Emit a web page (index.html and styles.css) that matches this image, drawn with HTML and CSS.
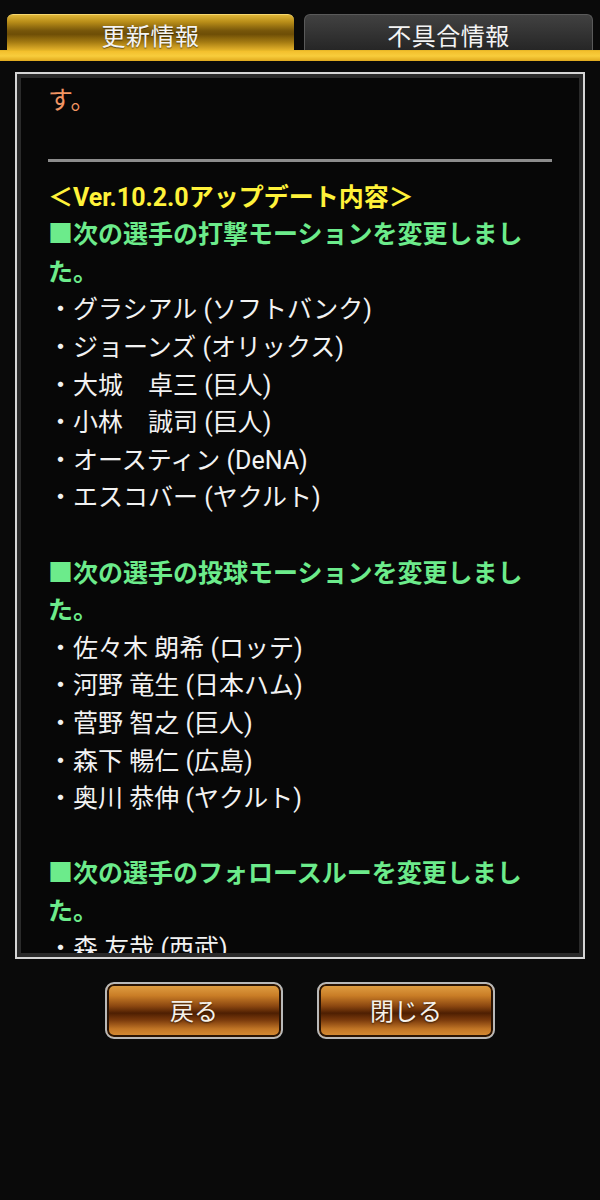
FILE: index.html
```html
<!DOCTYPE html>
<html lang="ja">
<head>
<meta charset="utf-8">
<link rel="stylesheet" href="styles.css">
</head>
<body>
<div class="tabs">
  <div class="tab active">更新情報</div>
  <div class="tab">不具合情報</div>
</div>
<div class="bar"></div>
<div class="panel">
  <div class="content">
    <p class="orange">す。</p>
    <hr class="sep">
    <p class="yellow">＜Ver.10.2.0アップデート内容＞</p>
    <p class="green">■次の選手の打撃モーションを変更しました。</p>
    <p>・グラシアル (ソフトバンク)</p>
    <p>・ジョーンズ (オリックス)</p>
    <p>・大城　卓三 (巨人)</p>
    <p>・小林　誠司 (巨人)</p>
    <p>・オースティン (DeNA)</p>
    <p>・エスコバー (ヤクルト)</p>
    <p class="blank">&nbsp;</p>
    <p class="green">■次の選手の投球モーションを変更しました。</p>
    <p>・佐々木 朗希 (ロッテ)</p>
    <p>・河野 竜生 (日本ハム)</p>
    <p>・菅野 智之 (巨人)</p>
    <p>・森下 暢仁 (広島)</p>
    <p>・奥川 恭伸 (ヤクルト)</p>
    <p class="blank">&nbsp;</p>
    <p class="green">■次の選手のフォロースルーを変更しました。</p>
    <p>・森 友哉 (西武)</p>
  </div>
</div>
<div class="buttons">
  <div class="btn">戻る</div>
  <div class="btn">閉じる</div>
</div>
</body>
</html>
```
FILE: styles.css
```css
html, body {
  margin: 0;
  padding: 0;
  background: #0a0a0a;
  width: 600px;
  height: 1200px;
  overflow: hidden;
  font-family: Roboto, "Noto Sans CJK JP", sans-serif;
}

.tabs {
  display: flex;
  gap: 10px;
  padding: 14px 7px 0 7px;
}

.tab {
  flex: 1;
  height: 36px;
  box-sizing: border-box;
  display: flex;
  align-items: center;
  justify-content: center;
  color: #f4f4f4;
  font-size: 24px;
  font-family: "Noto Sans CJK JP", sans-serif;
  letter-spacing: 0.5px;
  border-radius: 6px 6px 0 0;
  border: 1px solid #5a5a5a;
  border-bottom: none;
  background: linear-gradient(#414141 0%, #353535 45%, #262626 100%);
  padding-top: 4px;
}

.tab.active {
  border: none;
  border-top: 1px solid #f6d870;
  background: linear-gradient(#dfb537 0%, #b88d18 20%, #77560a 45%, #6e4e06 55%, #a67c12 78%, #e3b12a 100%);
  text-shadow: 0 1px 1px rgba(0,0,0,0.5);
}

.bar {
  height: 11px;
  box-sizing: border-box;
  background: linear-gradient(#f3bf2c 0%, #f8cd3c 50%, #e0a91e 100%);
  border-top: 1px solid #e8b828;
}

.panel {
  margin: 11px 15px 0 15px;
  height: 887px;
  box-sizing: border-box;
  border: 2px solid #d6d6d6;
  background: #070707;
  box-shadow: inset 0 0 0 4px #2a2a2a;
  padding: 4px;
  overflow: hidden;
}

.content {
  height: 100%;
  overflow: hidden;
  padding: 4px 27px 0 27px;
  box-sizing: border-box;
}

.content p {
  margin: 0;
  font-size: 25px;
  line-height: 37.6px;
  color: #f2f2f2;
}

.content .orange {
  color: #f29563;
}

.content .yellow {
  color: #fff23a;
  font-weight: bold;
}

.content .green {
  color: #6ceb8b;
  font-weight: bold;
}

.sep {
  border: none;
  height: 3px;
  background: #8c8c8c;
  margin: 39px 0 17px 0;
}

.buttons {
  display: flex;
  justify-content: center;
  gap: 34px;
  margin-top: 23px;
}

.btn {
  width: 178px;
  height: 57px;
  box-sizing: border-box;
  border: 2px solid #b9b9b9;
  border-radius: 9px;
  box-shadow: inset 0 0 0 2px #2a1404;
  background: linear-gradient(#e3a347 0%, #c97d26 22%, #8a4610 42%, #4e1f02 55%, #7a3a0c 68%, #c27626 85%, #d88e36 100%);
  display: flex;
  align-items: center;
  justify-content: center;
  color: #f6f1ea;
  font-size: 24px;
  font-family: "Noto Sans CJK JP", sans-serif;
  text-shadow: 0 1px 2px rgba(0,0,0,0.6);
  padding-bottom: 2px;
}
```
